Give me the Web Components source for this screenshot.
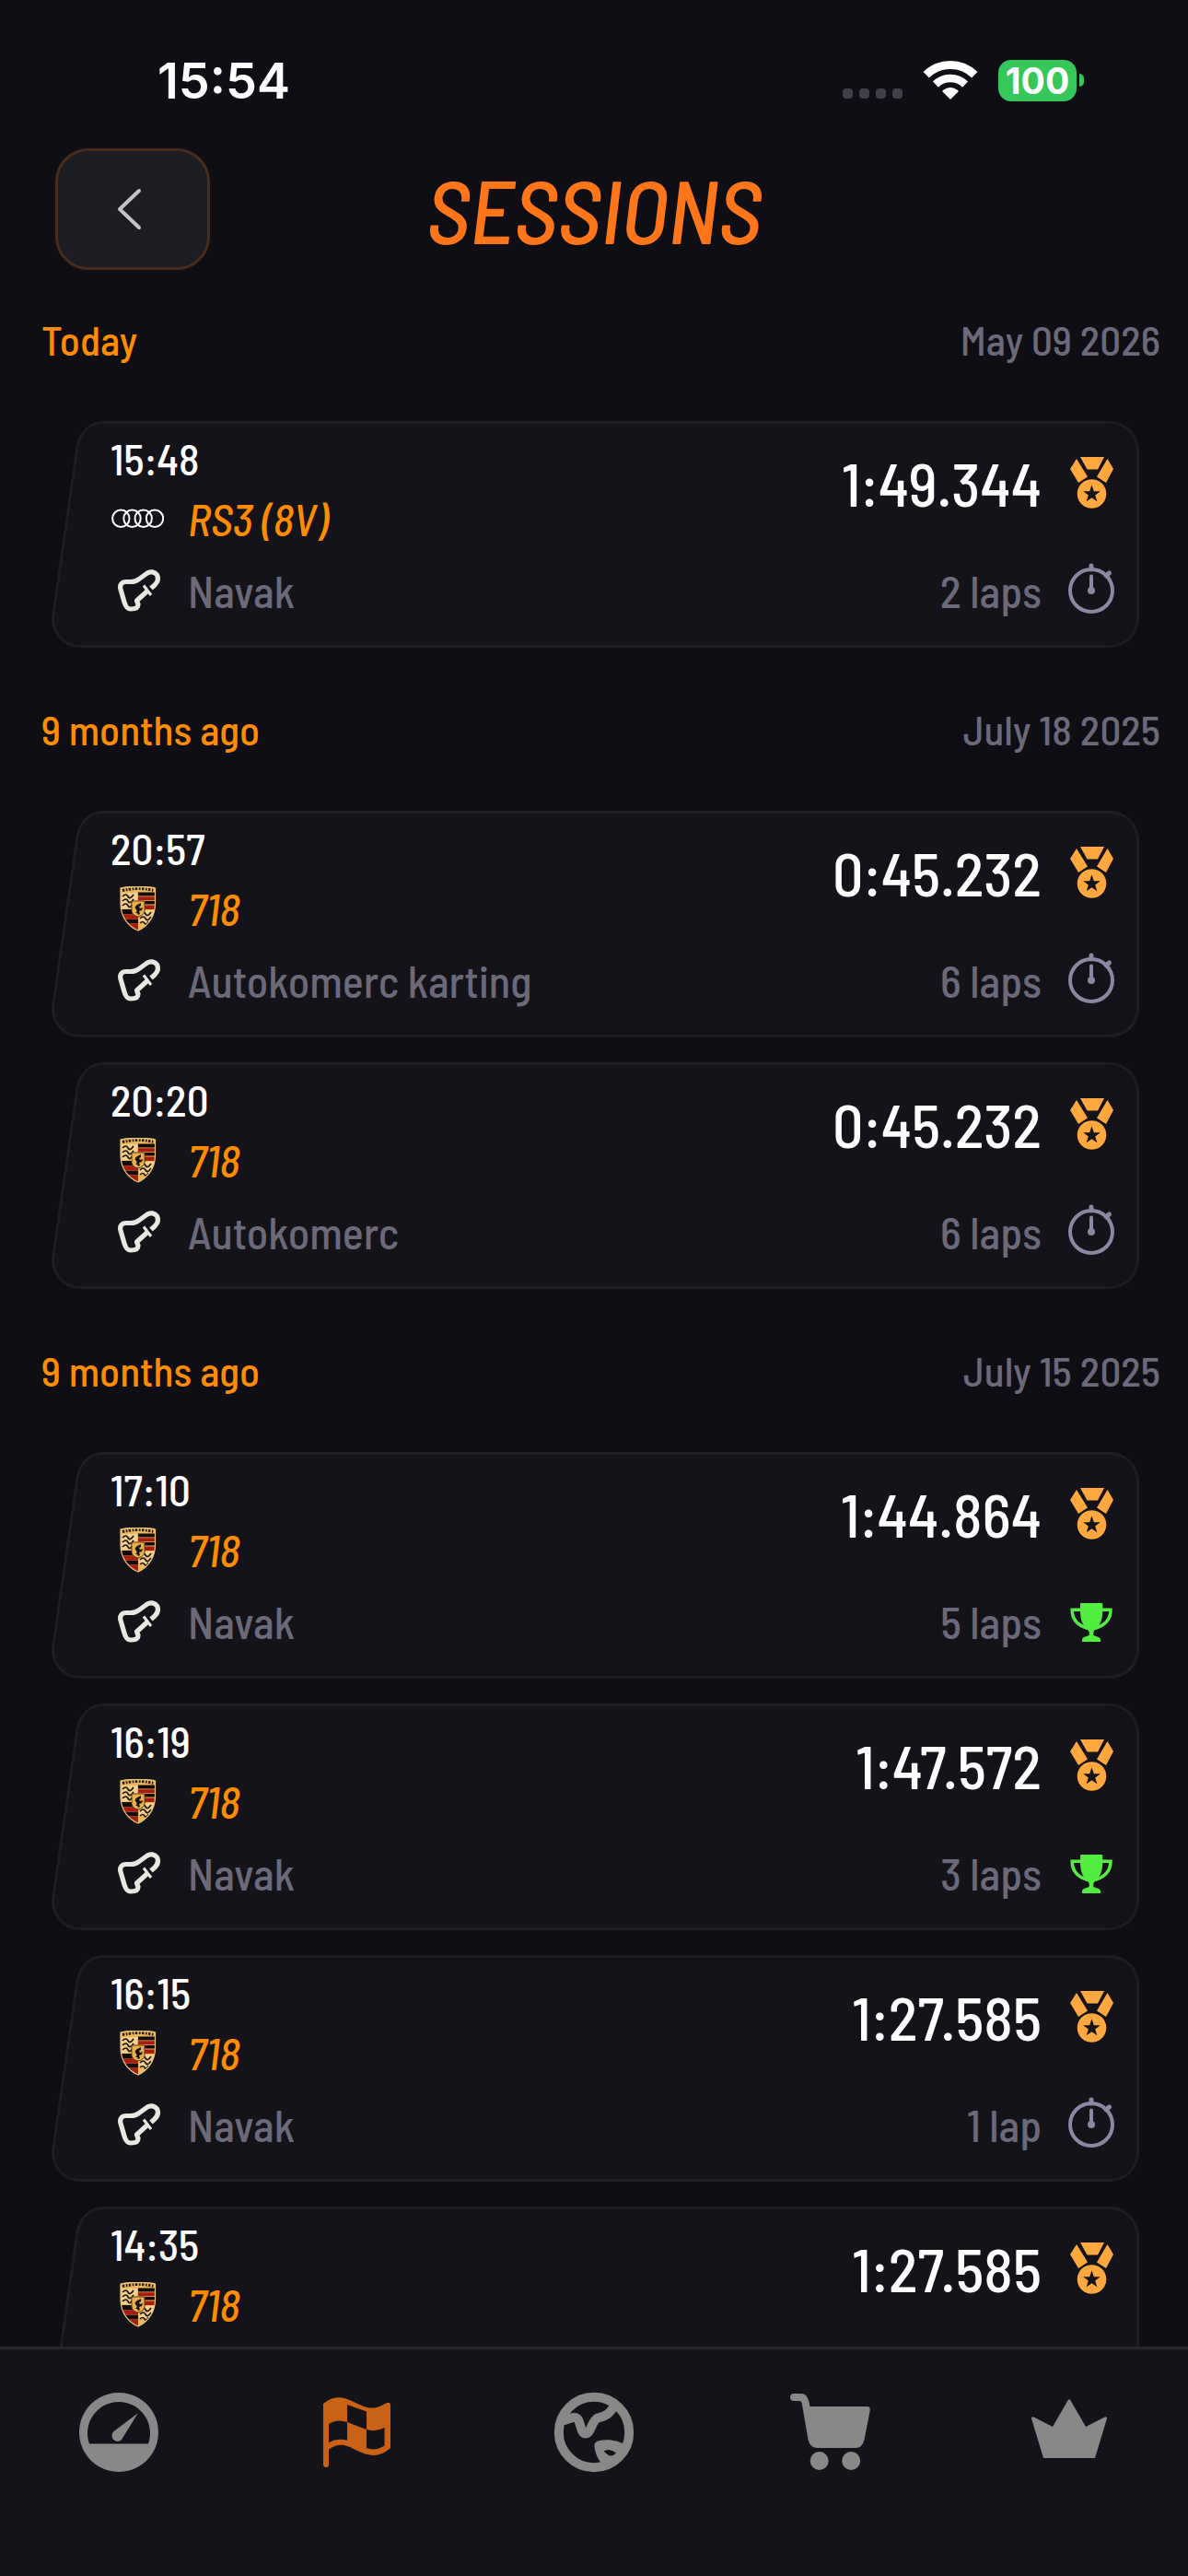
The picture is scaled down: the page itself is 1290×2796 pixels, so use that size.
<!DOCTYPE html>
<html lang="en">
<head>
<meta charset="utf-8">
<meta name="viewport" content="width=device-width, initial-scale=1">
<title>Sessions</title>
<style>
  body {
    margin: 0;
    background: #0f0e14;
    color: #fff;
    font-family: "Barlow Semi Condensed", "Roboto Condensed", sans-serif;
    font-weight: 500;
  }
</style>
</head>
<body>
<sessions-app>
  <status-bar slot="top" time="15:54" battery="100"></status-bar>
  <title-bar slot="top">Sessions</title-bar>

  <session-group label="Today" date="May 09 2026">
    <session-card time="15:48" brand="audi" car="RS3 (8V)" track="Navak" best="1:49.344" laps="2 laps" badge="stopwatch"></session-card>
  </session-group>
  <session-group label="9 months ago" date="July 18 2025">
    <session-card time="20:57" brand="porsche" car="718" track="Autokomerc karting" best="0:45.232" laps="6 laps" badge="stopwatch"></session-card>
    <session-card time="20:20" brand="porsche" car="718" track="Autokomerc" best="0:45.232" laps="6 laps" badge="stopwatch"></session-card>
  </session-group>
  <session-group label="9 months ago" date="July 15 2025">
    <session-card time="17:10" brand="porsche" car="718" track="Navak" best="1:44.864" laps="5 laps" badge="trophy"></session-card>
    <session-card time="16:19" brand="porsche" car="718" track="Navak" best="1:47.572" laps="3 laps" badge="trophy"></session-card>
    <session-card time="16:15" brand="porsche" car="718" track="Navak" best="1:27.585" laps="1 lap" badge="stopwatch"></session-card>
    <session-card time="14:35" brand="porsche" car="718" best="1:27.585"></session-card>
  </session-group>

  <tab-bar slot="bottom" active="sessions"></tab-bar>
</sessions-app>

<script>
const icons = {
  audi: `<svg viewBox="20 -7 58 60"><g fill="none" stroke="#fff" stroke-width="2"><circle cx="31.3" cy="22.7" r="9.2"/><circle cx="43.5" cy="22.7" r="9.2"/><circle cx="55.7" cy="22.7" r="9.2"/><circle cx="68" cy="22.7" r="9.2"/></g></svg>`,

  porsche: `<svg viewBox="10 16 58 60">
    <defs><clipPath id="shield"><path d="M21 24C28 21.500 33 23 39.500 22.500C46 23 52 21.500 58.500 24V41C58.500 56 49 66 40 70C30 66 21 56 21 41Z"/></clipPath></defs>
    <g clip-path="url(#shield)">
      <path fill="#eab75c" d="M20 20h40v52H20z"/>
      <path fill="#120d0b" d="M40 28.500h19v4H40zM40 38h19v3.500H40zM20 47h20v5.500H20zM20 57.500h20v5H20z"/>
      <path fill="#a61c10" d="M40 33.200h19v4.100H40zM40 42.500h19v4.500H40zM20 52.500h20v5H20zM20 62.500h20v8H20z"/>
      <path fill="#fff0c8" d="M22 29h17v17H22zM41 48h17v14H41z" opacity=".45"/>
      <path fill="none" stroke="#1d140c" stroke-width="1.7" d="M23 33q4-4 6 0t6-2M23 38q4-4 6 0t6-2M23 43q4-4 6 0t5-2M42 52q4-4 6 0t6-2M42 57q4-4 6 0t6-2M42 62q3-3 5 0t4-2"/>
      <path fill="none" stroke="#2a1a0c" stroke-width="3" stroke-dasharray="2.400 1.600 1.600 1.400" d="M23 26.500Q31 24.500 40 24.500T57 26.500"/>
      <path fill="#e9b04e" stroke="#5c3b16" stroke-width="1" d="M33 38h14v11q-1 5-7 6-6-1-7-6z"/>
      <path fill="#1a120c" d="M37 51c3-2 1-4 0-5s0-3 2-4l4-2v3l-2 1 1 2 3-1-1 3-3 1 1 3-2 1-1-2z"/>
    </g>
    <path fill="none" stroke="#e8c67c" stroke-width="1.200" d="M21 24C28 21.500 33 23 39.500 22.500C46 23 52 21.500 58.500 24V41C58.500 56 49 66 40 70C30 66 21 56 21 41Z"/>
  </svg>`,

  track: `<svg viewBox="21 71 58 60"><g fill="none" stroke="#e8e8e2" stroke-linejoin="round"><path stroke-width="5.200" d="M65 98.500L69 95C73 91 73 87 71.500 84C69 80.500 64 80 61 82L52 88.500C49 91 46 91.500 43 91.500H38C33 91.500 31 95 31.800 99L36 113.500C37.500 118.500 39 121 43 121C48 121 51 120 51 116L49.500 112L61 101.500"/><path stroke-width="3" d="M57 95.500L65 106"/></g></svg>`,

  medal: `<svg viewBox="20 14 50 60"><g fill="#ffa840"><path d="M33 16H59L52 29.500H40.500Z"/><path d="M29 18L22 29L31 44L41 37.500Z"/><path d="M62.500 18L69 29L61 44L51 37.500Z"/><path fill-rule="evenodd" d="M45.500 40.200a15.800 15.800 0 1 0 .001 0ZM45.500 46.300L47.800 53.200L54.800 53.200L49.200 57.400L51.300 64.200L45.500 60.200L39.700 64.200L41.800 57.400L36.200 53.200L43.200 53.200Z"/></g></svg>`,

  stopwatch: `<svg viewBox="20 131 50 60"><g fill="none" stroke="#8a88a2" stroke-linecap="round"><circle cx="45" cy="161" r="23" stroke-width="4"/><path stroke-width="5" d="M45 134V138M61 144.800L64.500 142"/><path stroke-width="4" d="M45 145.500V160"/></g><circle cx="45" cy="161" r="4" fill="#8a88a2"/></svg>`,

  trophy: `<svg viewBox="20 129 50 60"><path fill="#53ec40" d="M33 140Q33 139 34 139H56Q57.300 139 57.300 140V147C57.300 157 54.500 163 49.500 167.500C47.500 169 47 171 47.500 174C50 175.500 54 175 55 178.500V181H35V178.500C36 175 40 175.500 42.500 174C43.300 171 42.500 169 40.500 167.500C35.500 163 33 157 33 147Z"/><path fill="none" stroke="#53ec40" stroke-width="3.500" d="M34 146.300H24.200C24 157 31 163.500 41 166.500M56 146.300H66C66 157 59 163.500 49 166.500"/></svg>`,

  gauge: `<svg viewBox="0 0 90 90"><g fill="currentColor"><path fill-rule="evenodd" d="M45 2a43 43 0 1 0 .001 0ZM13 57.500A34 34 0 1 1 77 57.500Z"/><path d="M65.800 24.300L49.500 50.500A6.200 6.200 0 1 1 39.500 44Z"/></g></svg>`,

  flag: `<svg viewBox="0 0 90 90"><path fill="currentColor" fill-rule="evenodd" d="M9 14C20 5 30 6 42 12C58 20 65 21 77 13.500Q82 11 82 16V62C71 72 60 72 46 65C33 58 26 56 15 63.500V80A3 3 0 0 1 9 80ZM35 15V34L56 42V22.500ZM15 36V56Q24 51 35 53.700V34Q24 30 15 36ZM56 42V62.300Q66 65.500 75.500 59.500V40Q66 45 56 42Z"/></svg>`,

  globe: `<svg viewBox="0 0 90 90"><g fill="none" stroke="currentColor" stroke-width="10"><circle cx="45" cy="45" r="38.200"/><path d="M10 32.500C18 31.500 24 26 28 31.500C31 38 31 46.500 36 46.500C42 46 42 33 49 29.500C56 27.500 60 28 68 15"/></g><path fill="currentColor" fill-rule="evenodd" d="M80 59C72 54 60 51.500 49 54.500Q45 56 45.500 60C46 67 49 74 54 80L66 77ZM55.500 65.500Q62 61.500 69 67.500Q65 72 60 69.500Z"/></svg>`,

  cart: `<svg viewBox="0 0 90 90"><g fill="currentColor"><path d="M4 3H12C17 3 20 7 21.500 17H84Q87 17.300 86.800 21L80.500 53Q78.500 62 71 62H30Q21.500 62 19.500 53L13 15Q12.500 11 10 11H4A4 4 0 0 1 4 3Z"/><circle cx="31.700" cy="76" r="10"/><circle cx="66.200" cy="76" r="10"/></g></svg>`,

  crown: `<svg viewBox="0 0 90 90"><path fill="currentColor" d="M4 30Q4 27.500 6.500 28.500L27 39L43.500 10.500Q45 8 46.500 10.500L63 39L83.500 28.500Q86.500 27.500 86 30L73 73H17Z"/></svg>`,

  wifi: `<svg viewBox="0 0 60 44"><g fill="none" stroke="#fff"><path stroke-width="9" d="M3.700 16.300A37.500 37.500 0 0 1 56.300 16.300"/><path stroke-width="8.500" d="M13.900 26.600A23 23 0 0 1 46.100 26.600"/></g><path fill="#fff" d="M30 43L21 34Q30 26 39 34Z"/></svg>`,

  back: `<svg viewBox="0 0 32 48"><path fill="none" stroke="#c4c4c6" stroke-width="4" stroke-linecap="round" stroke-linejoin="round" d="M27 4L6 24L27 44"/></svg>`
};

class SessionsApp extends HTMLElement {
  constructor() {
    super();
    this.attachShadow({ mode: 'open' }).innerHTML = `
      <style>
        :host { display: flex; flex-direction: column; height: 100vh; }
        main { flex: 1; min-height: 0; overflow: hidden; }
      </style>
      <slot name="top"></slot>
      <main><slot></slot></main>
      <slot name="bottom"></slot>
    `;
  }
}

class StatusBar extends HTMLElement {
  connectedCallback() {
    this.attachShadow({ mode: 'open' }).innerHTML = `
      <style>
        :host {
          display: flex;
          align-items: center;
          justify-content: space-between;
          box-sizing: border-box;
          height: 161px;
          padding: 13px 113px 0 171px;
          font-family: Inter, sans-serif;
        }
        .time { font-size: 54px; font-weight: 600; }
        .right { display: flex; align-items: center; gap: 22px; }
        .signal { display: flex; gap: 7px; padding-top: 29px; }
        .signal i { width: 11px; height: 11px; border-radius: 4px; background: #3f3f47; }
        svg { display: block; width: 60px; height: 44px; }
        .battery { display: flex; align-items: center; gap: 3px; }
        .level {
          width: 85px;
          border-radius: 14px;
          background: #35c759;
          font-size: 39px;
          line-height: 45px;
          font-weight: 700;
          text-align: center;
        }
        .nub { width: 5px; height: 14px; border-radius: 0 7px 7px 0; background: #35c759; }
      </style>
      <span class="time">${this.getAttribute('time')}</span>
      <div class="right">
        <div class="signal"><i></i><i></i><i></i><i></i></div>
        ${icons.wifi}
        <div class="battery"><span class="level">${this.getAttribute('battery')}</span><span class="nub"></span></div>
      </div>
    `;
  }
}

class TitleBar extends HTMLElement {
  constructor() {
    super();
    this.attachShadow({ mode: 'open' }).innerHTML = `
      <style>
        :host {
          display: grid;
          grid-template-columns: 168px 1fr 168px;
          align-items: center;
          padding: 0 60px;
        }
        button {
          display: grid;
          place-items: center;
          width: 168px;
          height: 132px;
          padding: 0 8px 0 0;
          border: 3px solid #482c1b;
          border-radius: 36px;
          background: #1c1c22;
        }
        svg { width: 32px; height: 48px; }
        h1 {
          margin: 0;
          color: #ff7519;
          font-size: 96px;
          line-height: 116px;
          font-weight: 500;
          font-style: italic;
          text-align: center;
          text-transform: uppercase;
        }
      </style>
      <button type="button" aria-label="Back">${icons.back}</button>
      <h1><slot></slot></h1>
    `;
  }
}

class SessionGroup extends HTMLElement {
  connectedCallback() {
    this.attachShadow({ mode: 'open' }).innerHTML = `
      <style>
        :host { display: block; padding-top: 62px; }
        :host(:first-of-type) { padding-top: 49px; }
        header {
          display: flex;
          justify-content: space-between;
          padding: 0 30px 62px 45px;
          font-size: 45px;
          line-height: 53px;
        }
        h2 { margin: 0; color: #ff8c00; font: inherit; }
        time { color: #6b697a; }
        .cards { display: flex; flex-direction: column; gap: 27px; padding: 0 53px 0 56px; }
      </style>
      <header>
        <h2>${this.getAttribute('label')}</h2>
        <time>${this.getAttribute('date')}</time>
      </header>
      <div class="cards"><slot></slot></div>
    `;
  }
}

class SessionCard extends HTMLElement {
  connectedCallback() {
    const get = name => this.getAttribute(name) || '';
    this.attachShadow({ mode: 'open' }).innerHTML = `
      <style>
        :host { display: block; }
        a { display: flex; height: 246px; color: #fff; text-decoration: none; font-size: 48px; line-height: 60px; }
        .edge { flex: none; width: 64px; height: 246px; }
        .body {
          flex: 1;
          display: flex;
          justify-content: space-between;
          border: 3px solid #1d1d22;
          border-left: 0;
          border-radius: 0 32px 32px 0;
          background: #141319;
          padding: 7px 24px 29px 0;
        }
        .col { display: flex; flex-direction: column; justify-content: space-between; }
        .right { align-items: flex-end; padding-top: 21px; }
        .row { display: flex; align-items: center; gap: 26px; min-height: 60px; }
        .right .row { gap: 29px; }
        .time { font-size: 47px; }
        .car { margin-top: 6px; }
        .car span { color: #ff8c00; font-style: italic; }
        .muted { color: #6b697a; }
        .best { font-size: 66px; line-height: 72px; }
        .left svg { display: block; width: 58px; height: 60px; }
        .right svg { display: block; width: 50px; height: 60px; }
      </style>
      <a href="#session">
        <svg class="edge" viewBox="0 0 64 246">
          <path fill="#141319" d="M64 1.500H56C42 1.500 31 12 28 28L2 209C-1 228 12 244.500 31 244.500H64Z"/>
          <path fill="none" stroke="#1d1d22" stroke-width="3" d="M64 1.500H56C42 1.500 31 12 28 28L2 209C-1 228 12 244.500 31 244.500H64"/>
        </svg>
        <div class="body">
          <div class="col left">
            <div>
              <div class="time">${get('time')}</div>
              <div class="row car">${icons[get('brand')]}<span>${get('car')}</span></div>
            </div>
            ${get('track') ? `<div class="row muted">${icons.track}<span>${get('track')}</span></div>` : ''}
          </div>
          <div class="col right">
            <div class="row best"><span>${get('best')}</span>${icons.medal}</div>
            ${get('laps') ? `<div class="row muted"><span>${get('laps')}</span>${icons[get('badge')]}</div>` : ''}
          </div>
        </div>
      </a>
    `;
  }
}

class TabBar extends HTMLElement {
  connectedCallback() {
    const tabs = [['drive', 'gauge'], ['sessions', 'flag'], ['tracks', 'globe'], ['shop', 'cart'], ['premium', 'crown']];
    const active = this.getAttribute('active');
    this.attachShadow({ mode: 'open' }).innerHTML = `
      <style>
        :host { display: block; border-top: 3px solid #26262c; background: #141319; }
        nav { display: grid; grid-template-columns: repeat(5, 1fr); padding: 45px 0 111px; }
        a { display: grid; place-items: center; color: #888; }
        a.active { color: #c96217; }
        svg { display: block; width: 90px; height: 90px; }
      </style>
      <nav>
        ${tabs.map(([name, icon]) => `<a href="#${name}" aria-label="${name}" class="${name === active ? 'active' : ''}">${icons[icon]}</a>`).join('')}
      </nav>
    `;
  }
}

customElements.define('sessions-app', SessionsApp);
customElements.define('status-bar', StatusBar);
customElements.define('title-bar', TitleBar);
customElements.define('session-group', SessionGroup);
customElements.define('session-card', SessionCard);
customElements.define('tab-bar', TabBar);
</script>
</body>
</html>
